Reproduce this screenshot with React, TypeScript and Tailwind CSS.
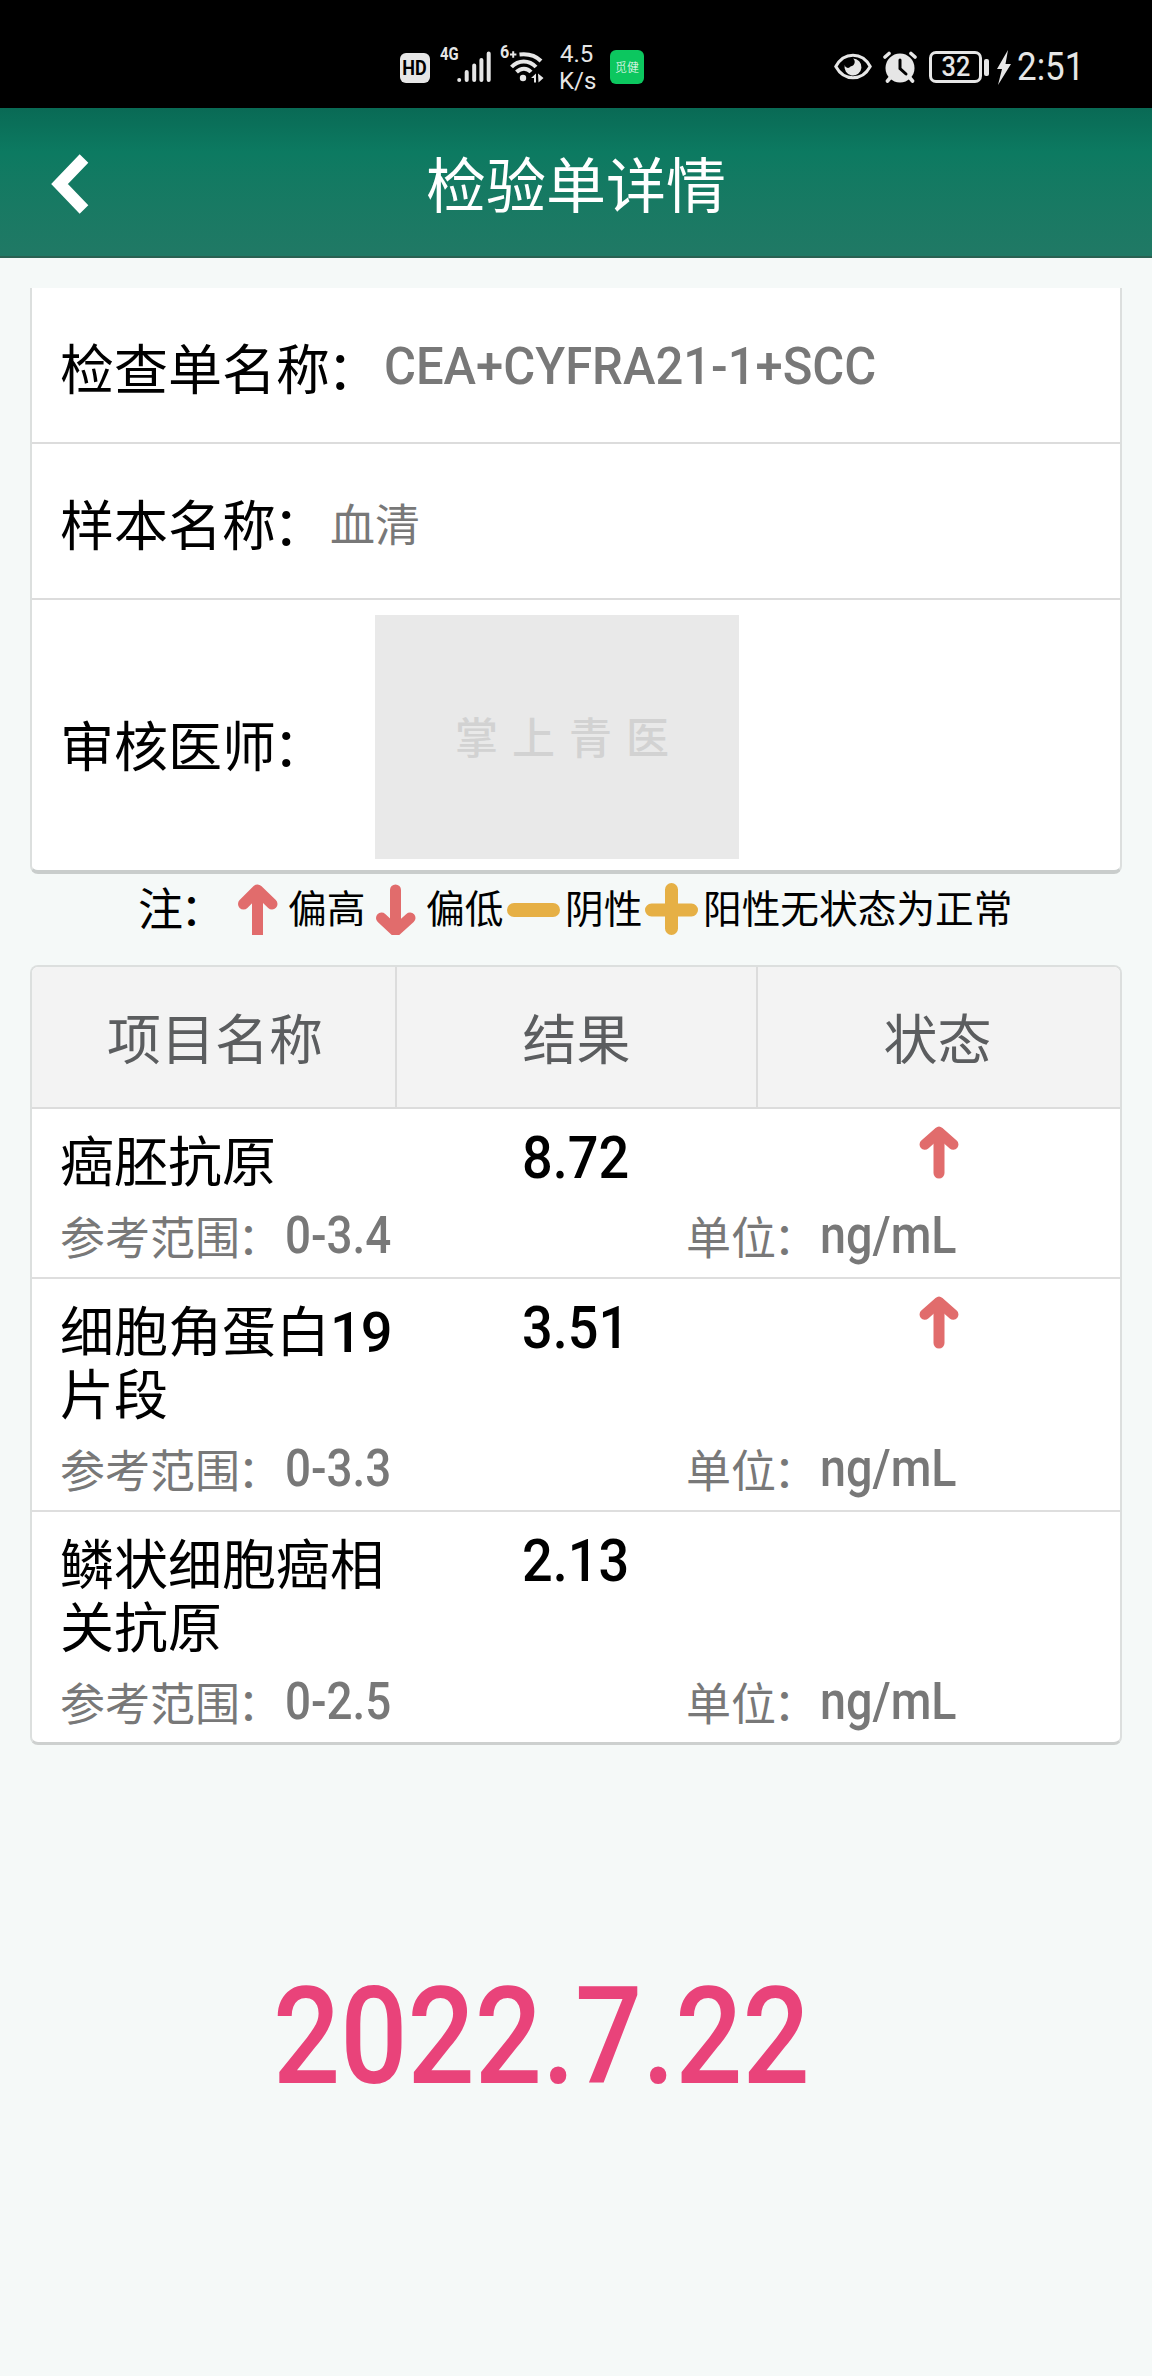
interface ReportItem {
  name: string;
  result: string;
  high: boolean;
  range: string;
  unit: string;
}

const items: ReportItem[] = [
  { name: '癌胚抗原', result: '8.72', high: true, range: '0-3.4', unit: 'ng/mL' },
  { name: '细胞角蛋白19片段', result: '3.51', high: true, range: '0-3.3', unit: 'ng/mL' },
  { name: '鳞状细胞癌相关抗原', result: '2.13', high: false, range: '0-2.5', unit: 'ng/mL' },
];

function ArrowUp() {
  return (
    <svg className="block w-[40px] h-[54px]" viewBox="0 0 40 54" fill="none" stroke="#e16c6c" strokeWidth="11" strokeLinecap="round" strokeLinejoin="round">
      <path d="M20 48V8" />
      <path d="M5.8 19.5L20 7L34.2 19.5" strokeWidth="10.5" />
    </svg>
  );
}

// Full-width colon, pulled towards the character before it
function Colon() {
  return <span className="-ml-[0.06em] mr-[0.06em]">：</span>;
}

function StatusBar() {
  return (
    <div className="flex h-[108px] bg-black pt-[38px] text-[#e6e6e6] font-['Roboto',sans-serif]">
      {/* Left cluster: network */}
      <div className="ml-[400px] mt-[15px] flex h-[30px] w-[30px] items-center justify-center rounded-[6px] bg-[#e6e6e6] text-black">
        <span className="scale-x-90 text-[20px] font-bold leading-none">HD</span>
      </div>
      <div className="ml-[10px] mt-[5px] w-[18px] text-[19px] font-bold leading-[22px]">
        <span className="block origin-left scale-x-[0.78]">4G</span>
      </div>
      <svg className="-ml-[1px] mt-[13px] h-[32px] w-[34px]" viewBox="0 0 34 32" stroke="#e6e6e6" strokeWidth="4" strokeLinecap="round">
        <path d="M2.2 29V29.1M9.7 29V21M17.2 29V14.5M24.4 29V9M31.7 29V2.5" />
      </svg>
      <div className="ml-[9px] mt-[3px] w-[10px] text-[19px] font-bold leading-[22px]">
        <span className="block origin-left scale-x-[0.85]">6</span>
      </div>
      <svg className="mt-[12px] h-[34px] w-[36px]" viewBox="0 0 36 34" fill="none" stroke="#e6e6e6" strokeWidth="4">
        <path d="M0 4.5H6.4M3.2 1.3V7.7" strokeWidth="2" />
        <path d="M9.5 4.5C18 3.5 26 6 31 11" />
        <path d="M1.5 17C8.5 9.5 19 9.5 26 17" />
        <path d="M6.5 22C11 17.5 17 17.5 21 22" />
        <circle cx="13" cy="28" r="3.2" fill="#e6e6e6" stroke="none" />
        <path d="M21 28L26 23.5V32.5H24V28ZM28 23.5L33.5 28L28.5 32.5Z" fill="#e6e6e6" stroke="none" />
      </svg>
      <div className="ml-[13px] mt-[3px] w-[40px] text-[24px] leading-[27px]">
        <div className="ml-[1px]">4.5</div>
        <div>K/s</div>
      </div>
      <div className="ml-[11px] mt-[12px] flex h-[34px] w-[34px] items-center justify-center rounded-[6px] bg-[#0cc75f] text-[12px] font-light leading-none text-white font-['Noto_Sans_CJK_SC',sans-serif]">
        觅健
      </div>

      {/* Right cluster: alarm, battery and clock */}
      <svg className="ml-[190px] mt-[15px] h-[28px] w-[38px]" viewBox="0 0 38 28" fill="none" stroke="#e6e6e6" strokeWidth="3">
        <path d="M1.8 13.5C10 -1.5 28 -1.5 36.2 13.5C28 28.5 10 28.5 1.8 13.5Z" />
        <path d="M19 5.5A8.5 8.5 0 1 1 10.7 12A3.2 3.2 0 0 0 16.5 13.5A4.5 4.5 0 0 0 19 5.5Z" fill="#e6e6e6" stroke="none" />
      </svg>
      <svg className="ml-[11px] mt-[13px] h-[32px] w-[34px]" viewBox="0 0 34 32" fill="none" stroke="#e6e6e6" strokeWidth="3.6" strokeLinecap="round">
        <circle cx="17" cy="17" r="14.5" fill="#e6e6e6" stroke="none" />
        <path d="M2 6L6 2.5M32 6L28 2.5M7 27L4.5 30M27 27L29.5 30" />
        <path d="M17 9V17.5L23 23" stroke="#000" strokeWidth="3" />
      </svg>
      <div className="ml-[12px] mt-[13px] flex h-[32px] w-[53px] items-center justify-center rounded-[7px] border-[3px] border-[#e6e6e6]">
        <span className="origin-center scale-x-90 text-[28px] font-medium leading-none">32</span>
      </div>
      <div className="ml-[2px] mt-[21px] h-[17px] w-[5px] rounded-[2px] bg-[#e6e6e6]" />
      <svg className="ml-[7px] mt-[12px] h-[35px] w-[15px]" viewBox="0 0 15 35" fill="#e6e6e6">
        <path d="M12 0L1 19H6L2 35L15 14H9.5Z" />
      </svg>
      <div className="ml-[6px] mt-[6px] text-[38px] leading-[46px]">
        <span className="block origin-left scale-x-[0.92]">2:51</span>
      </div>
    </div>
  );
}

function InfoLabel({ text }: { text: string }) {
  return (
    <span className="pt-[3px] text-[54px] leading-[64px] text-black">
      {text}
      <Colon />
    </span>
  );
}

export default function App() {
  return (
    <div className="h-[2376px] w-[1152px] overflow-hidden bg-[#f5f9f8] font-['Noto_Sans_CJK_SC',sans-serif]">
      <StatusBar />

      {/* Title bar */}
      <header className="relative flex h-[150px] items-center justify-center border-b-2 border-[#2a6152] bg-linear-to-b from-[#096a55] via-[#0c7a61] via-30% to-[#207965]">
        <svg className="absolute left-[50px] top-[45px] h-[62px] w-[40px]" viewBox="0 0 40 62" fill="none" stroke="#fff" strokeWidth="12">
          <path d="M34 5.5L9.5 31L34 56.5" />
        </svg>
        <h1 className="text-[60px] leading-[72px] text-white">检验单详情</h1>
      </header>

      {/* Report info */}
      <section className="mx-[30px] mt-[30px] h-[586px] rounded-b-[8px] border-x-2 border-b-4 border-x-[#dcdfde] border-b-[#c9cdcc] bg-white">
        <div className="flex h-[156px] items-center border-b-2 border-[#dcdcdc] pl-[28px]">
          <InfoLabel text="检查单名称" />
          <span className="origin-left scale-x-[0.96] whitespace-nowrap pt-[3px] text-[51px] font-medium leading-[64px] text-[#787878] font-['Roboto',sans-serif]">CEA+CYFRA21-1+SCC</span>
        </div>
        <div className="flex h-[156px] items-center border-b-2 border-[#dcdcdc] pl-[28px]">
          <InfoLabel text="样本名称" />
          <span className="pt-[3px] text-[45px] leading-[64px] text-[#787878]">血清</span>
        </div>
        <div className="flex h-[270px] pl-[28px]">
          <div className="w-[315px] pt-[112px]">
            <InfoLabel text="审核医师" />
          </div>
          <div className="mt-[15px] flex h-[244px] w-[364px] items-center justify-center bg-[#e9e9e9] pb-[3px] pl-[24px] text-[43px] font-medium tracking-[14px] text-[#d2d2d2]">
            掌上青医
          </div>
        </div>
      </section>

      {/* Legend */}
      <div className="flex h-[91px] pl-[138px] text-[38.7px] leading-[65px] text-black">
        <span className="w-[100px] text-[45px]">
          注<Colon />
        </span>
        <svg className="mt-[10px] h-[51px] w-[40px]" viewBox="0 0 40 51" fill="none" stroke="#e16c6c" strokeWidth="11" strokeLinecap="round" strokeLinejoin="round">
          <path d="M19.5 52V8M5.5 20L19.5 6L34 20" />
        </svg>
        <span className="ml-[10px] w-[88px]">偏高</span>
        <svg className="mt-[10px] h-[51px] w-[40px]" viewBox="0 0 40 51" fill="none" stroke="#e16c6c" strokeWidth="11" strokeLinecap="round" strokeLinejoin="round">
          <path d="M19.5 6V46M5.5 34L19.5 47L34 34" />
        </svg>
        <span className="ml-[10px] w-[81px]">偏低</span>
        <div className="mt-[29px] h-[14px] w-[53px] rounded-full bg-[#e6b045]" />
        <span className="ml-[5px] w-[80px]">阴性</span>
        <svg className="mt-[9px] h-[52px] w-[53px]" viewBox="0 0 53 52" stroke="#e6b045" strokeWidth="13" strokeLinecap="round">
          <path d="M6.5 27H46.5M26.5 6.5V45.5" />
        </svg>
        <span className="ml-[5px] whitespace-nowrap">阳性无状态为正常</span>
      </div>

      {/* Results */}
      <section className="mx-[30px] h-[780px] overflow-hidden rounded-[8px] border-2 border-b-[3px] border-[#dcdfde] border-b-[#cdd0cf] bg-white">
        <div className="flex h-[142px] border-b-2 border-[#dcdcdc] bg-[#f3f3f3] text-center text-[54px] leading-[140px] text-[#5b5d5f]">
          <div className="w-[365px] border-r-2 border-[#dcdcdc] pl-[3px]">项目名称</div>
          <div className="w-[361px] border-r-2 border-[#dcdcdc]">结果</div>
          <div className="flex-1 pr-[3px]">状态</div>
        </div>
        {items.map((item) => (
          <div key={item.name} className="border-b-2 border-[#dedede] pl-[28px] pt-[18px] last:border-b-0">
            <div className="flex">
              <div className="w-[344px] text-[54px] leading-[63px] text-black">
                {item.name.split(/(\d+)/).map((part, i) =>
                  /\d/.test(part) ? (
                    <span key={i} className="text-[56px] font-medium leading-[40px] tracking-[-1px] font-['Roboto',sans-serif]">
                      {part}
                    </span>
                  ) : (
                    part
                  )
                )}
              </div>
              <div className="-mt-[1px] ml-[118px] h-[63px] w-[397px] text-[60px] font-medium leading-[63px] text-black font-['Roboto',sans-serif]">
                <span className="inline-block origin-left scale-x-[0.9]">{item.result}</span>
              </div>
              {item.high && (
                <div className="-mt-[2px] h-[54px]">
                  <ArrowUp />
                </div>
              )}
            </div>
            <div className="mt-[14px] flex h-[73px] whitespace-nowrap text-[45px] leading-[64px] text-[#787878]">
              <span className="w-[225px]">
                参考范围
                <Colon />
              </span>
              <span className="w-[401px] text-[52px] font-medium font-['Roboto',sans-serif]">
                <span className="inline-block origin-left scale-x-[0.88]">{item.range}</span>
              </span>
              <span className="w-[134px]">
                单位
                <Colon />
              </span>
              <span className="text-[51px] font-medium font-['Roboto',sans-serif]">
                <span className="inline-block origin-left scale-x-[0.915]">{item.unit}</span>
              </span>
            </div>
          </div>
        ))}
      </section>

      <div className="ml-[273px] mt-[212px] text-[135px] font-medium leading-[160px] text-[#e9437a] font-['Roboto',sans-serif]">
        <span className="inline-block origin-left scale-x-[0.877]">2022.7.22</span>
      </div>
    </div>
  );
}
